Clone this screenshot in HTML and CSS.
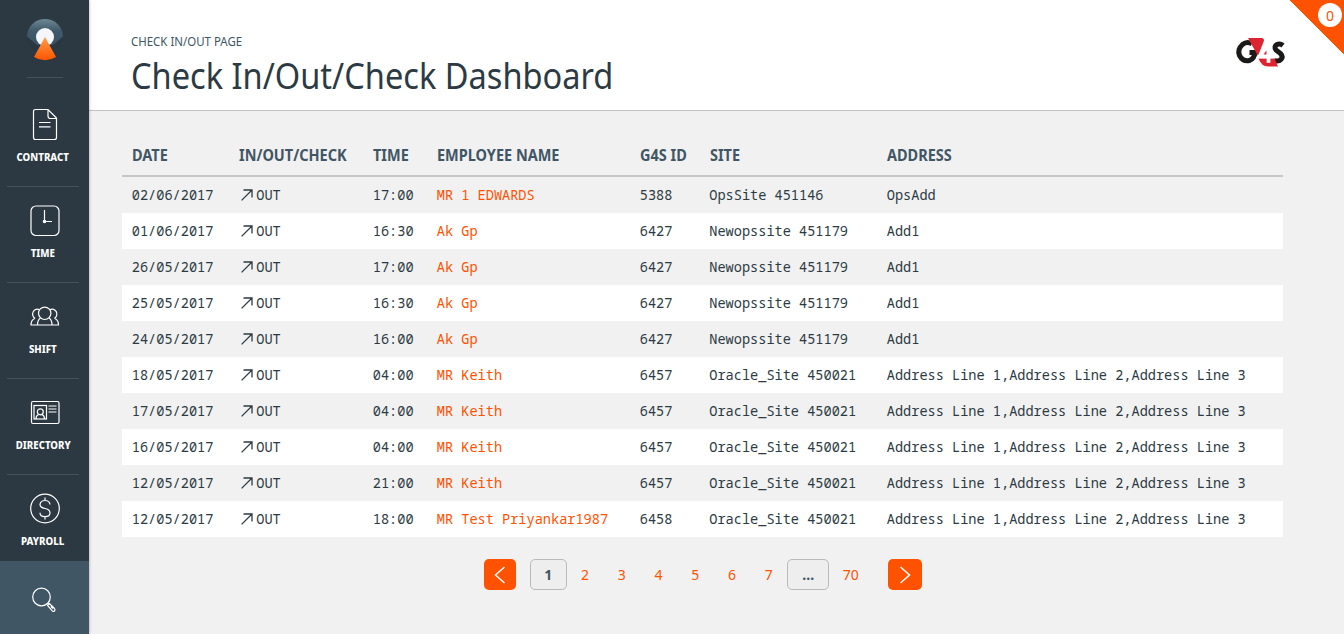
FILE: index.html
```html
<!DOCTYPE html>
<html lang="en">
<head>
<meta charset="utf-8">
<title>Check In/Out/Check Dashboard</title>
<link rel="stylesheet" href="styles.css">
</head>
<body>
<svg class="defs" aria-hidden="true">
  <symbol id="arrow" viewBox="0 0 12 12"><path d="M.6 11.400 11 1M2.500 1H11V8.500"/></symbol>
</svg>
<div class="app">
  <nav class="sidebar">
    <div class="brand">
      <svg class="brand-logo" width="36" height="42" viewBox="0 0 36 42">
        <defs>
          <linearGradient id="cap" x1="0" y1="0" x2="0" y2="1"><stop offset="0" stop-color="#6d8894"/><stop offset=".45" stop-color="#405a6b"/><stop offset="1" stop-color="#3a5262"/></linearGradient>
          <linearGradient id="cone" x1="0" y1="0" x2="0" y2="1"><stop offset="0" stop-color="#ff9d48"/><stop offset="1" stop-color="#ff5400"/></linearGradient>
        </defs>
        <circle cx="18" cy="18" r="17.500" fill="#2a3740"/>
        <path d="M0 17.500A18 17.500 0 0 1 36 17.500L26 26H10Z" fill="url(#cap)"/>
        <circle cx="18" cy="18" r="9" fill="#f4f6fa"/>
        <path d="M18 18 29 38Q24 41.200 18 41.200T7 38Z" fill="url(#cone)"/>
      </svg>
    </div>
    <a class="item"><svg class="icon" width="30" height="34" viewBox="0 0 30 34"><path d="M5.500 1.500H18L26.500 10V29.500Q26.500 31.500 24.500 31.500H5.500Q3.500 31.500 3.500 29.500V3.500Q3.500 1.500 5.500 1.500ZM18 1.500V8Q18 10.500 20.500 10.500H26.500M9 14.500H20.500M9 18.800H20.500"/></svg><span>CONTRACT</span></a>
    <a class="item"><svg class="icon" width="30" height="34" viewBox="0 0 30 34"><rect x="1" y="2" width="28" height="29.500" rx="5"/><path d="M14.500 6V17.500H22"/><circle class="solid" cx="14.500" cy="17.500" r="1.200"/></svg><span>TIME</span></a>
    <a class="item"><svg class="icon" width="30" height="34" viewBox="0 0 30 34"><circle cx="14.700" cy="13.300" r="6.200"/><path d="M9.500 9.800A4.600 4.800 0 1 0 5 18.300M19.900 9.800A4.600 4.800 0 1 1 24.500 18.300M10.500 18Q7.500 20 7.500 25H22Q22 20 19 18M5 18.300Q1 20 1 25H7.500M24.500 18.300Q28.500 20 28.500 25H22"/></svg><span>SHIFT</span></a>
    <a class="item"><svg class="icon" width="30" height="34" viewBox="0 0 30 34"><rect x="1.500" y="5.500" width="27.500" height="22" rx="1.500"/><rect x="4" y="9.500" width="12.500" height="13.500"/><circle cx="10.300" cy="15.800" r="3"/><path d="M6 23Q6 19.500 8.500 18.500M14.500 23Q14.500 19.500 12 18.500M18.500 10H26.500M18.500 13H26.500M18.500 16H26.500"/></svg><span>DIRECTORY</span></a>
    <a class="item"><svg class="icon" width="30" height="34" viewBox="0 0 30 34"><circle cx="15" cy="16.500" r="14.300"/><path d="M15 5.500V9M15 24.500V27.500M20 12.500Q19.500 8.500 15 8.500T10 12.500Q10 15.500 15 16.500T20 20.800Q20 24.700 15 24.700T10 20.800"/></svg><span>PAYROLL</span></a>
    <a class="search"><svg class="icon" width="26" height="26" viewBox="0 0 26 26"><circle cx="10.500" cy="10" r="8.800"/><path d="M16.500 16.500 18 18M18.300 16.500 23.500 21.500Q24.500 23 23.500 24T21.300 23.800L16.600 18.500ZM20 19.500 22 21.500"/></svg></a>
  </nav>
  <div class="main">
    <header class="header">
      <div>
        <p class="crumb">CHECK IN/OUT PAGE</p>
        <h1>Check In/Out/Check Dashboard</h1>
      </div>
      <svg class="client-logo" width="50" height="30" viewBox="0 0 50 30">
        <g fill="none" stroke="#1b1a18" stroke-width="5">
          <path d="M16 5.800Q11 3 6.500 6.500Q1 11.500 3.500 17.500Q7 24 13.500 22.500Q18.500 20.500 19 14.500H13.500"/>
          <path d="M47 7.500Q44 5 41 6.500Q37.500 8.500 40 12L44.500 15.500Q47.500 19 45 21.500Q42.500 24 38 22.500"/>
        </g>
        <path d="M12 0H26Q29 1 27.500 4L22 18Z" fill="#dc2530"/>
        <path d="M22.500 20.500H38.500L42 28.500H32Q25.500 28.500 22.500 20.500Z" fill="#dc2530"/>
        <path d="M32.500 7V24.700M31.500 7 23.500 18.300H37" fill="none" stroke="#fff" stroke-width="3.800"/>
        <path d="M30.500 12.500V16.500H27.500Z" fill="#dc2530"/>
      </svg>
      <div class="corner"><span>0</span></div>
    </header>
    <main>
      <table>
        <colgroup><col class="c1"><col class="c2"><col class="c3"><col class="c4"><col class="c5"><col class="c6"><col></colgroup>
        <thead><tr><th><span>DATE</span></th><th><span>IN/OUT/CHECK</span></th><th><span>TIME</span></th><th><span>EMPLOYEE NAME</span></th><th><span>G4S ID</span></th><th><span>SITE</span></th><th><span>ADDRESS</span></th></tr></thead>
        <tbody>
          <tr><td>02/06/2017</td><td><svg class="arrow"><use href="#arrow"/></svg>OUT</td><td>17:00</td><td><a>MR 1 EDWARDS</a></td><td>5388</td><td>OpsSite 451146</td><td>OpsAdd</td></tr>
          <tr><td>01/06/2017</td><td><svg class="arrow"><use href="#arrow"/></svg>OUT</td><td>16:30</td><td><a>Ak Gp</a></td><td>6427</td><td>Newopssite 451179</td><td>Add1</td></tr>
          <tr><td>26/05/2017</td><td><svg class="arrow"><use href="#arrow"/></svg>OUT</td><td>17:00</td><td><a>Ak Gp</a></td><td>6427</td><td>Newopssite 451179</td><td>Add1</td></tr>
          <tr><td>25/05/2017</td><td><svg class="arrow"><use href="#arrow"/></svg>OUT</td><td>16:30</td><td><a>Ak Gp</a></td><td>6427</td><td>Newopssite 451179</td><td>Add1</td></tr>
          <tr><td>24/05/2017</td><td><svg class="arrow"><use href="#arrow"/></svg>OUT</td><td>16:00</td><td><a>Ak Gp</a></td><td>6427</td><td>Newopssite 451179</td><td>Add1</td></tr>
          <tr><td>18/05/2017</td><td><svg class="arrow"><use href="#arrow"/></svg>OUT</td><td>04:00</td><td><a>MR Keith</a></td><td>6457</td><td>Oracle_Site 450021</td><td>Address Line 1,Address Line 2,Address Line 3</td></tr>
          <tr><td>17/05/2017</td><td><svg class="arrow"><use href="#arrow"/></svg>OUT</td><td>04:00</td><td><a>MR Keith</a></td><td>6457</td><td>Oracle_Site 450021</td><td>Address Line 1,Address Line 2,Address Line 3</td></tr>
          <tr><td>16/05/2017</td><td><svg class="arrow"><use href="#arrow"/></svg>OUT</td><td>04:00</td><td><a>MR Keith</a></td><td>6457</td><td>Oracle_Site 450021</td><td>Address Line 1,Address Line 2,Address Line 3</td></tr>
          <tr><td>12/05/2017</td><td><svg class="arrow"><use href="#arrow"/></svg>OUT</td><td>21:00</td><td><a>MR Keith</a></td><td>6457</td><td>Oracle_Site 450021</td><td>Address Line 1,Address Line 2,Address Line 3</td></tr>
          <tr><td>12/05/2017</td><td><svg class="arrow"><use href="#arrow"/></svg>OUT</td><td>18:00</td><td><a>MR Test Priyankar1987</a></td><td>6458</td><td>Oracle_Site 450021</td><td>Address Line 1,Address Line 2,Address Line 3</td></tr>
        </tbody>
      </table>
      <div class="pager">
        <a class="step prev"><svg width="12" height="18" viewBox="0 0 12 18"><path d="M10.500 1 1.500 9 10.500 17"/></svg></a>
        <a class="box">1</a><a>2</a><a>3</a><a>4</a><a>5</a><a>6</a><a>7</a><a class="box dots">...</a><a class="last">70</a>
        <a class="step next"><svg width="12" height="18" viewBox="0 0 12 18"><path d="M1.500 1 10.500 9 1.500 17"/></svg></a>
      </div>
    </main>
  </div>
</div>
</body>
</html>
```
FILE: styles.css
```css
* { box-sizing: border-box; }
body { margin: 0; background: #f1f1f1; color: #2c3a43; font-family: "Noto Sans", sans-serif; overflow: hidden; }
.defs { display: none; }
.app { display: flex; height: 634px; }
.sidebar { width: 89px; flex: none; display: flex; flex-direction: column; background: #2d3942; box-shadow: 0 0 3px rgba(0,0,0,.35); z-index: 1; }
.brand { flex: none; height: 78px; width: 36px; margin: 0 0 12px 27px; padding-top: 19px; border-bottom: 1px solid #44515a; }
.brand-logo { display: block; }
.item { flex: none; height: 96px; margin: 0 10px 0 7px; padding-top: 17px; border-bottom: 1px solid #45525b; display: flex; flex-direction: column; align-items: center; }
.brand + .item { height: 97px; padding-top: 18px; }
.item:nth-of-type(5) { height: 86px; border-bottom: 0; }
.item svg { display: block; margin-left: 3px; }
.item span { color: #fff; font-size: 11px; font-weight: 800; line-height: 14px; margin-top: 8px; transform: scaleX(.88); }
.icon { fill: none; stroke: #fff; stroke-width: 1.2; }
.icon .solid { fill: #fff; }
.search { flex: none; height: 73px; background: #415665; display: flex; justify-content: center; padding: 26px 2px 0 0; }

.main { flex: 1; }
.header { position: relative; height: 111px; background: #fff; border-bottom: 1px solid #bfc1c2; display: flex; justify-content: space-between; padding: 33px 58px 0 42px; }
.crumb { margin: 0; font-size: 12px; line-height: 17px; color: #415665; transform: scaleX(.955); transform-origin: 0 0; }
h1 { margin: 0; font-size: 37px; line-height: 50px; font-weight: 400; white-space: nowrap; width: 480px; transform: scaleX(.88); transform-origin: 0 0; }
.client-logo { margin: 5px 0 0; overflow: visible; }
.corner { position: absolute; top: 0; right: 0; width: 54px; height: 54px; background: linear-gradient(45deg, transparent 50%, #ff5200 50%); }
.corner span { position: absolute; top: 3px; right: 2px; width: 24px; height: 24px; border-radius: 50%; background: #fff; color: #ff5200; font-size: 14px; line-height: 26px; text-align: center; }

main { padding: 22px 61px 0 33px; }
table { width: 1161px; table-layout: fixed; border-collapse: separate; border-spacing: 0; }
.c1 { width: 106.500px; } .c2 { width: 134.500px; } .c3 { width: 64px; } .c4 { width: 203px; } .c5 { width: 69.500px; } .c6 { width: 177.500px; }
th { height: 44px; padding: 2px 0 0 10px; text-align: left; font-size: 16px; font-weight: 700; color: #415665; border-bottom: 2px solid #c6c6c6; white-space: nowrap; }
th span { display: inline-block; transform: scaleX(.905); transform-origin: 0 0; }
td { height: 36px; padding: 0 0 2px 9.800px; font-family: "Noto Sans Mono", "Noto Mono", "DejaVu Sans Mono", monospace; font-size: 13.600px; white-space: nowrap; }
tr:nth-child(even) td { background: #fff; }
td a { color: #ff5200; }
.arrow { width: 12px; height: 12px; margin: 0 3px 0 3px; vertical-align: -1px; fill: none; stroke: #2c3a43; stroke-width: 1.3; }

.pager { display: flex; margin: 22px 0 0 362px; height: 31px; font-size: 14px; line-height: 31px; }
.pager a { width: 36.760px; text-align: center; color: #ff5200; }
.pager .box { border: 1px solid #bababa; border-radius: 5px; color: #415665; font-weight: 700; line-height: 30px; background: #eee; }
.pager .dots { width: 42px; }
.pager .last { width: 43px; }
.pager .step { background: #ff5200; border-radius: 5px; display: flex; align-items: center; justify-content: center; fill: none; stroke: #fff; stroke-width: 1.5; }
.pager .prev { width: 32px; margin-right: 14px; }
.pager .next { width: 34px; margin-left: 16px; }
```
